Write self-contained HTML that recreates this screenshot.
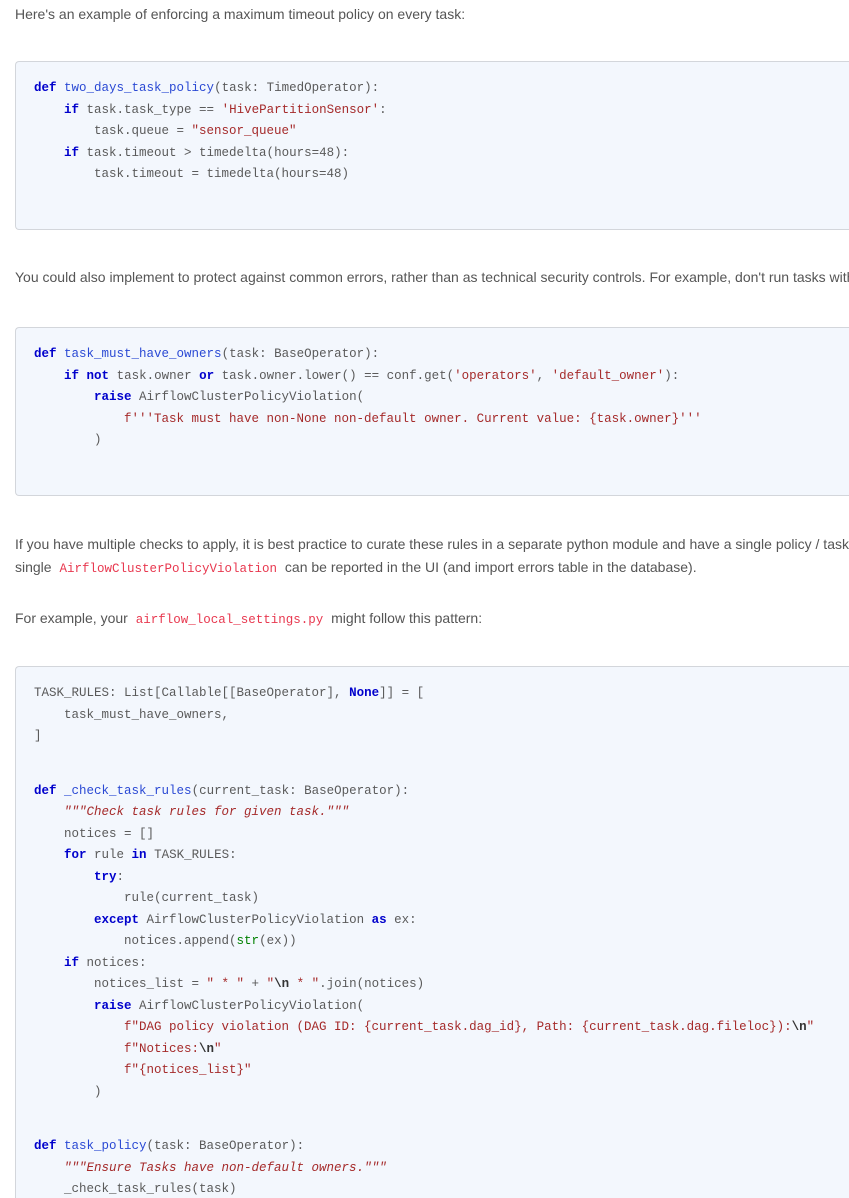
<!DOCTYPE html>
<html><head><meta charset="utf-8"><style>
html,body{margin:0;padding:0;background:#fff;width:849px;height:1198px;overflow:hidden}
body{font-family:"Liberation Sans",sans-serif;font-size:14px;color:#555;position:relative}
.t{position:absolute;left:15px;white-space:nowrap;line-height:23px}
.ic{font-family:"Liberation Mono",monospace;font-size:12.5px;color:#e8384f;padding:0 4px}
.box{position:absolute;left:15px;width:845px;background:#f3f7fd;border:1px solid #d3d6db;border-right:none;border-radius:4px 0 0 4px;box-sizing:border-box;padding:16px 18px;font-family:"Liberation Mono",monospace;font-size:12.5px;color:#5a5a5a;white-space:pre;overflow:hidden}
.l{height:21.5px;line-height:21.5px}
.b{height:16.5px}
.k{color:#0000cc;font-weight:bold}
.f{color:#2a49d4}
.s{color:#a52a2a}
.d{color:#a52a2a;font-style:italic}
.g{color:#008000}
.e{font-weight:bold;color:#333}
</style></head><body>
<div class="t" style="top:3px">Here's an example of enforcing a maximum timeout policy on every task:</div>
<div class="box" style="top:61px;height:169px"><div class="l"><span class="k">def</span> <span class="f">two_days_task_policy</span>(task: TimedOperator):</div><div class="l">    <span class="k">if</span> task.task_type == <span class="s">'HivePartitionSensor'</span>:</div><div class="l">        task.queue = <span class="s">"sensor_queue"</span></div><div class="l">    <span class="k">if</span> task.timeout &gt; timedelta(hours=48):</div><div class="l">        task.timeout = timedelta(hours=48)</div></div>
<div class="t" style="top:266px">You could also implement to protect against common errors, rather than as technical security controls. For example, don't run tasks without airflow owners:</div>
<div class="box" style="top:327px;height:169px"><div class="l"><span class="k">def</span> <span class="f">task_must_have_owners</span>(task: BaseOperator):</div><div class="l">    <span class="k">if</span> <span class="k">not</span> task.owner <span class="k">or</span> task.owner.lower() == conf.get(<span class="s">'operators'</span>, <span class="s">'default_owner'</span>):</div><div class="l">        <span class="k">raise</span> AirflowClusterPolicyViolation(</div><div class="l">            <span class="s">f'''Task must have non-None non-default owner. Current value: {task.owner}'''</span></div><div class="l">        )</div></div>
<div class="t" style="top:533px">If you have multiple checks to apply, it is best practice to curate these rules in a separate python module and have a single policy / task mutation hook</div>
<div class="t" style="top:556px">single <span class="ic">AirflowClusterPolicyViolation</span> can be reported in the UI (and import errors table in the database).</div>
<div class="t" style="top:607px">For example, your <span class="ic">airflow_local_settings.py</span> might follow this pattern:</div>
<div class="box" style="top:666px;height:540px"><div class="l">TASK_RULES: List[Callable[[BaseOperator], <span class="k">None</span>]] = [</div><div class="l">    task_must_have_owners,</div><div class="l">]</div><div class="b"></div><div class="b"></div><div class="l"><span class="k">def</span> <span class="f">_check_task_rules</span>(current_task: BaseOperator):</div><div class="l">    <span class="d">"""Check task rules for given task."""</span></div><div class="l">    notices = []</div><div class="l">    <span class="k">for</span> rule <span class="k">in</span> TASK_RULES:</div><div class="l">        <span class="k">try</span>:</div><div class="l">            rule(current_task)</div><div class="l">        <span class="k">except</span> AirflowClusterPolicyViolation <span class="k">as</span> ex:</div><div class="l">            notices.append(<span class="g">str</span>(ex))</div><div class="l">    <span class="k">if</span> notices:</div><div class="l">        notices_list = <span class="s">" * "</span> + <span class="s">"<span class="e">\n</span> * "</span>.join(notices)</div><div class="l">        <span class="k">raise</span> AirflowClusterPolicyViolation(</div><div class="l">            <span class="s">f"DAG policy violation (DAG ID: {current_task.dag_id}, Path: {current_task.dag.fileloc}):<span class="e">\n</span>"</span></div><div class="l">            <span class="s">f"Notices:<span class="e">\n</span>"</span></div><div class="l">            <span class="s">f"{notices_list}"</span></div><div class="l">        )</div><div class="b"></div><div class="b"></div><div class="l"><span class="k">def</span> <span class="f">task_policy</span>(task: BaseOperator):</div><div class="l">    <span class="d">"""Ensure Tasks have non-default owners."""</span></div><div class="l">    _check_task_rules(task)</div></div>
</body></html>
